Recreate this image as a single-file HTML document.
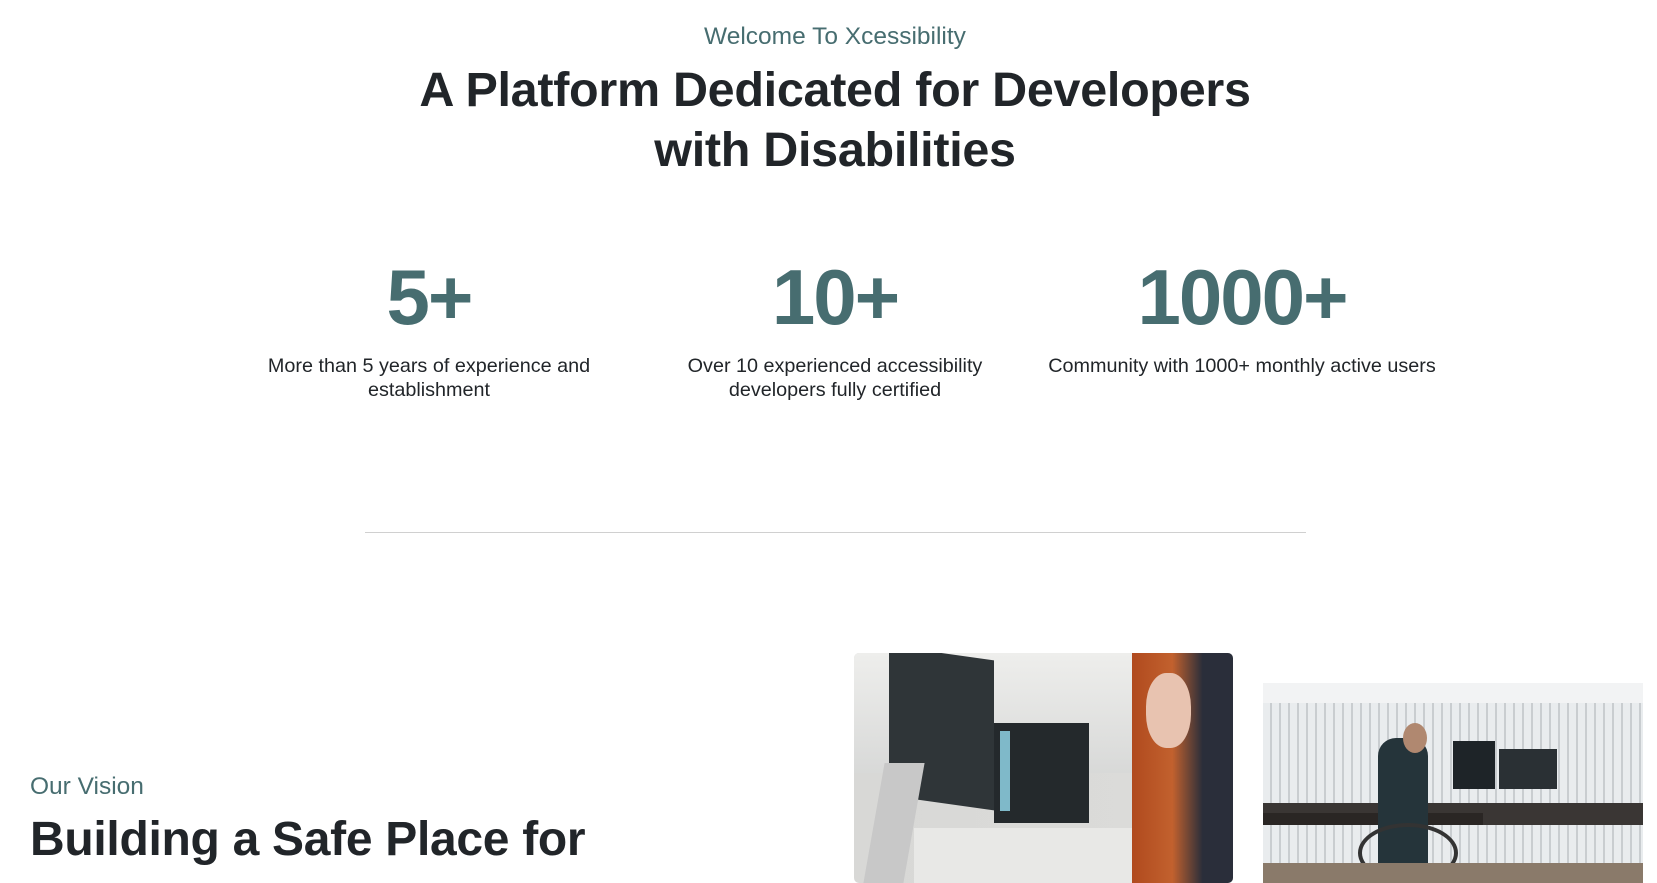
<!DOCTYPE html>
<html><head><meta charset="utf-8">
<style>
*{margin:0;padding:0;box-sizing:border-box}
body{width:1657px;height:872px;overflow:hidden;background:#fff;font-family:"Liberation Sans",sans-serif;position:relative;color:#212529}
.a{position:absolute;white-space:nowrap}
.c{transform:translateX(-50%);text-align:center}
.teal{color:#476d70}
.h{font-weight:bold;font-size:48.5px;letter-spacing:-0.3px}
.num{font-weight:bold;font-size:78px;color:#476d70;letter-spacing:-2px;line-height:1}
.st{font-size:19.8px;line-height:24px;color:#212529}
</style></head><body>
<div class="a c teal" style="left:835px;top:23px;font-size:24.5px">Welcome To Xcessibility</div>
<div class="a c h" style="left:835px;top:60px;line-height:60px">A Platform Dedicated for Developers<br>with Disabilities</div>

<div class="a c num" style="left:429px;top:258px">5+</div>
<div class="a c num" style="left:835px;top:258px">10+</div>
<div class="a c num" style="left:1242px;top:258px">1000+</div>

<div class="a c st" style="left:429px;top:354px">More than 5 years of experience and<br>establishment</div>
<div class="a c st" style="left:835px;top:354px">Over 10 experienced accessibility<br>developers fully certified</div>
<div class="a c st" style="left:1242px;top:354px">Community with 1000+ monthly active users</div>

<div class="a" style="left:365px;top:532px;width:941px;height:1px;background:#d0d0d0"></div>

<div class="a teal" style="left:30px;top:773px;font-size:24.5px">Our Vision</div>
<div class="a h" style="left:30px;top:812px;font-size:48px;line-height:56px">Building a Safe Place for</div>

<div class="a" style="left:854px;top:653px;width:379px;height:230px;border-radius:5px;overflow:hidden;background:linear-gradient(90deg,#d8d8d6 0%,#dcdcda 100%)">
  <div class="a" style="left:0;top:0;width:379px;height:120px;background:linear-gradient(180deg,#eeeeec,#d8d9d8)"></div>
  <div class="a" style="left:35px;top:0;width:105px;height:150px;background:#2f3538;transform:skewY(8deg)"></div>
  <div class="a" style="left:140px;top:70px;width:95px;height:100px;background:#24292c"></div>
  <div class="a" style="left:146px;top:78px;width:10px;height:80px;background:#7fb9c9"></div>
  <div class="a" style="left:20px;top:110px;width:40px;height:120px;background:#c8c8c8;transform:skewX(-10deg)"></div>
  <div class="a" style="left:60px;top:175px;width:230px;height:60px;background:#e8e8e6"></div>
  <div class="a" style="left:278px;top:0;width:101px;height:230px;background:linear-gradient(90deg,#b04a1e,#c2612e 40%,#2a2e3a 70%)"></div>
  <div class="a" style="left:292px;top:20px;width:45px;height:75px;border-radius:45%;background:#e8c3b0"></div>
</div>

<div class="a" style="left:1263px;top:683px;width:380px;height:200px;overflow:hidden;background:repeating-linear-gradient(90deg,#e9ecee 0 7px,#c9cdd0 7px 9px)">
  <div class="a" style="left:0;top:0;width:380px;height:20px;background:#f2f3f4"></div>
  <div class="a" style="left:0;top:120px;width:380px;height:22px;background:#3a3634"></div>
  <div class="a" style="left:0;top:130px;width:220px;height:12px;background:#2a2624"></div>
  <div class="a" style="left:190px;top:58px;width:42px;height:48px;background:#1e2428"></div>
  <div class="a" style="left:236px;top:66px;width:58px;height:40px;background:#2a3034"></div>
  <div class="a" style="left:115px;top:55px;width:50px;height:130px;border-radius:18px 18px 0 0;background:#25343a"></div>
  <div class="a" style="left:140px;top:40px;width:24px;height:30px;border-radius:50%;background:#b08870"></div>
  <div class="a" style="left:95px;top:140px;width:100px;height:60px;border:4px solid #333;border-radius:50%"></div>
  <div class="a" style="left:0;top:180px;width:380px;height:20px;background:#8a7a6a"></div>
</div>
</body></html>
